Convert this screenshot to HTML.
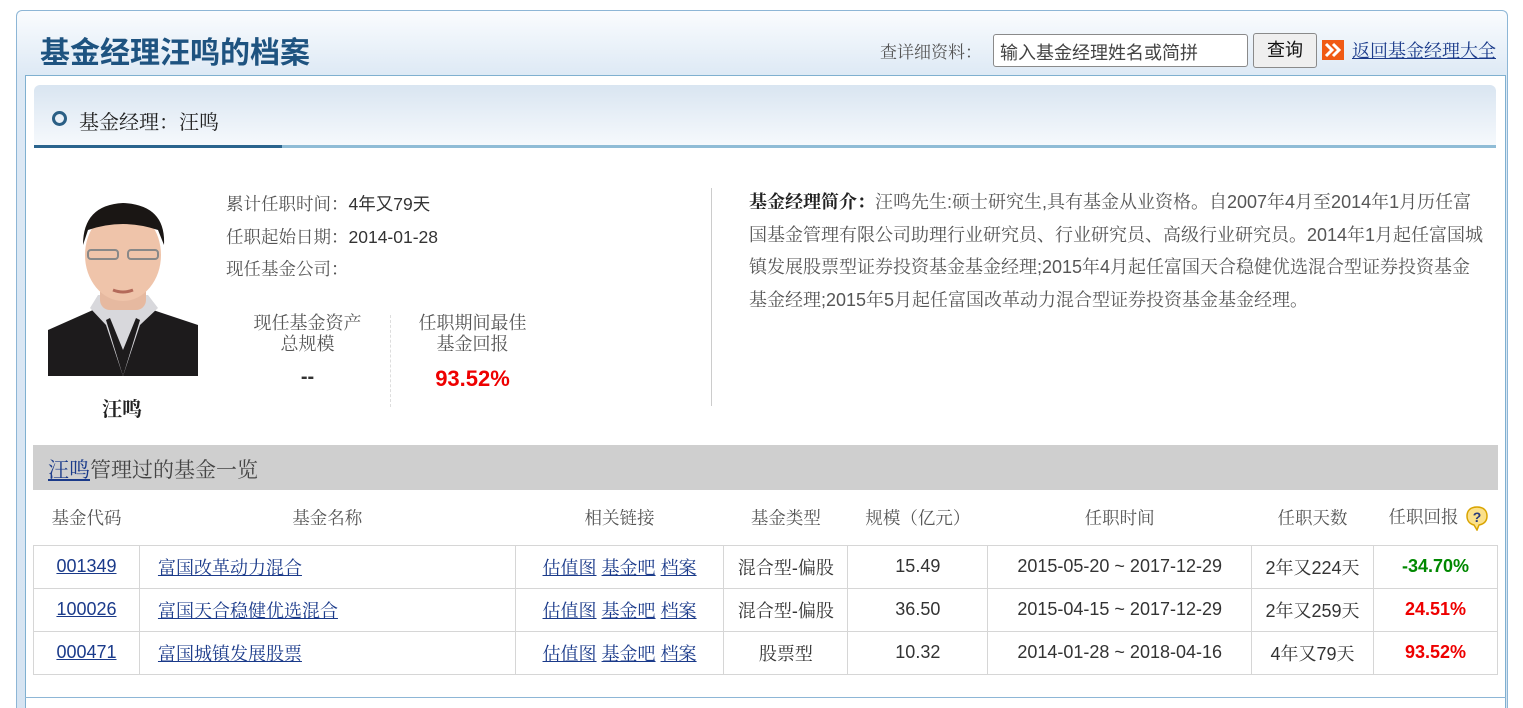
<!DOCTYPE html>
<html><head><meta charset="utf-8">
<style>
*{margin:0;padding:0;box-sizing:border-box}
html,body{width:1523px;height:708px;overflow:hidden}
body{background:#fff;position:relative;font-family:"Liberation Sans","Noto Sans CJK SC",sans-serif;color:#333}
.abs{position:absolute}
.serif{font-family:"Liberation Sans","Noto Serif CJK SC",serif}
a{color:#1a3a8a;text-decoration:underline}
#outer{left:16px;top:10px;width:1492px;height:698px;border:1px solid #8db6d6;border-bottom:none;border-radius:6px 6px 0 0;background:linear-gradient(#fafcfe 0px,#dde9f5 65px,#d6e4f2 100%)}
#inner{left:25px;top:75px;width:1481px;height:633px;background:#fff;border:1px solid #7fb0d0;border-bottom:none}
#title{left:40px;top:28px;font-size:30px;font-weight:bold;color:#1e5380}
#sec{left:34px;top:85px;width:1462px;height:63px;border-radius:6px 6px 0 0;background:linear-gradient(#d9e5f1,#f7fafd)}
table{border-collapse:collapse;position:absolute;left:33px;top:490px;width:1465px}
td{border:1px solid #d6d6d6;text-align:center;font-size:18px;height:43px;color:#333}
tr.h td{border:none;border-bottom:1px solid #d6d6d6;height:55px;color:#555;font-size:17.5px}
.num{font-family:"Liberation Sans",sans-serif;font-size:18px}
</style></head><body>
<div id="outer" class="abs"></div>
<div id="title" class="abs">基金经理汪鸣的档案</div>
<div class="abs serif" style="left:880px;top:38px;font-size:17px;color:#555">查详细资料：</div>
<div class="abs" style="left:993px;top:34px;width:255px;height:33px;border:1px solid #8a8a8a;border-radius:3px;background:#fff;font-size:18px;color:#444;padding:4px 6px">输入基金经理姓名或简拼</div>
<div class="abs" style="left:1253px;top:33px;width:64px;height:35px;border:1px solid #8a8a8a;border-radius:3px;background:#efefef;font-size:18px;color:#111;text-align:center;line-height:33px">查询</div>
<svg class="abs" style="left:1322px;top:40px" width="22" height="20"><rect width="22" height="20" fill="#f05a14"/><path d="M4 4l6 6-6 6M11 4l6 6-6 6" stroke="#fff" stroke-width="3" fill="none"/></svg>
<a class="abs serif" style="left:1352px;top:37px;font-size:18px">返回基金经理大全</a>
<div id="inner" class="abs"></div>
<div id="sec" class="abs"></div>
<div class="abs" style="left:34px;top:145px;width:1462px;height:3px;background:#8fbcd6"></div>
<div class="abs" style="left:34px;top:145px;width:248px;height:3px;background:#2a648e"></div>
<div class="abs" style="left:52px;top:111px;width:15px;height:15px;border:3px solid #2a5f85;border-radius:50%"></div>
<div class="abs serif" style="left:79px;top:106px;font-size:20px;color:#222">基金经理：汪鸣</div>

<svg class="abs" style="left:48px;top:200px" width="150" height="176" viewBox="0 0 150 176">
<rect width="150" height="176" fill="#fff"/>
<path d="M0 130 L45 110 L105 110 L150 125 L150 176 L0 176Z" fill="#1d1b1c"/>
<path d="M42 108 L58 125 L75 176 L92 125 L110 108 L100 95 L50 95Z" fill="#d8d8dc"/>
<path d="M58 120 L75 176 L92 120 L88 118 L75 150 L62 118Z" fill="#1d1b1c"/>
<rect x="52" y="60" width="46" height="50" rx="10" fill="#e6b9a0"/>
<ellipse cx="75" cy="55" rx="38" ry="46" fill="#efc4aa"/>
<path d="M35 45 Q35 5 75 3 Q118 5 116 45 L110 30 Q75 18 40 30Z" fill="#1a1614"/>
<rect x="40" y="50" width="30" height="9" rx="3" fill="none" stroke="#888" stroke-width="2"/>
<rect x="80" y="50" width="30" height="9" rx="3" fill="none" stroke="#888" stroke-width="2"/>
<path d="M65 90 Q75 94 85 90" stroke="#b46a5a" stroke-width="3" fill="none"/>
</svg>
<div class="abs serif" style="left:102px;top:393px;font-size:20px;font-weight:bold;color:#222">汪鸣</div>

<div class="abs" style="left:226px;top:188px;font-size:17.5px;line-height:32.5px;color:#555">
<div><span class="serif">累计任职时间：</span><span style="color:#333">4年又79天</span></div>
<div><span class="serif">任职起始日期：</span><span style="color:#333">2014-01-28</span></div>
<div><span class="serif">现任基金公司：</span></div>
</div>
<div class="abs serif" style="left:230px;top:313px;width:155px;text-align:center;font-size:18px;line-height:21px;color:#555">现任基金资产<br>总规模</div>
<div class="abs" style="left:230px;top:366px;width:155px;text-align:center;font-size:20px;font-weight:bold;color:#333">--</div>
<div class="abs" style="left:390px;top:315px;height:92px;border-left:1px dashed #ddd"></div>
<div class="abs serif" style="left:395px;top:313px;width:155px;text-align:center;font-size:18px;line-height:21px;color:#555">任职期间最佳<br>基金回报</div>
<div class="abs" style="left:395px;top:366px;width:155px;text-align:center;font-size:22px;font-weight:bold;color:#e00">93.52%</div>

<div class="abs" style="left:711px;top:188px;height:218px;border-left:1px solid #ccc"></div>
<div class="abs serif" style="left:749px;top:186px;font-size:18px;line-height:32.5px;color:#555;white-space:nowrap">
<div><b style="color:#222">基金经理简介：</b>汪鸣先生:硕士研究生,具有基金从业资格。自2007年4月至2014年1月历任富</div>
<div>国基金管理有限公司助理行业研究员、行业研究员、高级行业研究员。2014年1月起任富国城</div>
<div>镇发展股票型证券投资基金基金经理;2015年4月起任富国天合稳健优选混合型证券投资基金</div>
<div>基金经理;2015年5月起任富国改革动力混合型证券投资基金基金经理。</div>
</div>

<div class="abs" style="left:33px;top:445px;width:1465px;height:45px;background:#cfcfcf"></div>
<div class="abs serif" style="left:48px;top:454px;font-size:21px;color:#444"><a style="color:#1a3a8a">汪鸣</a>管理过的基金一览</div>

<table class="serif">
<colgroup><col style="width:106px"><col style="width:376px"><col style="width:209px"><col style="width:124px"><col style="width:140px"><col style="width:264px"><col style="width:122px"><col style="width:124px"></colgroup>
<tr class="h"><td>基金代码</td><td>基金名称</td><td>相关链接</td><td>基金类型</td><td>规模（亿元）</td><td>任职时间</td><td>任职天数</td><td style="text-align:left;padding-left:15px">任职回报 <svg width="24" height="26" style="vertical-align:middle;margin-left:2px" viewBox="0 0 24 26"><path d="M12 2C5 2 2 6 2 11c0 5 3 8 7 9l3 5 2-5c5-1 8-4 8-9 0-5-3-9-10-9z" fill="#fbe08a" stroke="#d9a400" stroke-width="1.5"/><text x="12" y="17" font-size="14" font-weight="bold" text-anchor="middle" fill="#2a3a7a" font-family="Liberation Sans">?</text></svg></td></tr>
<tr><td class="num"><a>001349</a></td><td style="text-align:left;padding-left:18px"><a>富国改革动力混合</a></td><td><a>估值图</a> <a>基金吧</a> <a>档案</a></td><td>混合型-偏股</td><td class="num">15.49</td><td class="num">2015-05-20 ~ 2017-12-29</td><td>2年又224天</td><td class="num" style="color:#080;font-weight:bold">-34.70%</td></tr>
<tr><td class="num"><a>100026</a></td><td style="text-align:left;padding-left:18px"><a>富国天合稳健优选混合</a></td><td><a>估值图</a> <a>基金吧</a> <a>档案</a></td><td>混合型-偏股</td><td class="num">36.50</td><td class="num">2015-04-15 ~ 2017-12-29</td><td>2年又259天</td><td class="num" style="color:#e00;font-weight:bold">24.51%</td></tr>
<tr><td class="num"><a>000471</a></td><td style="text-align:left;padding-left:18px"><a>富国城镇发展股票</a></td><td><a>估值图</a> <a>基金吧</a> <a>档案</a></td><td>股票型</td><td class="num">10.32</td><td class="num">2014-01-28 ~ 2018-04-16</td><td>4年又79天</td><td class="num" style="color:#e00;font-weight:bold">93.52%</td></tr>
</table>
<div class="abs" style="left:25px;top:697px;width:1481px;height:1px;background:#8db6d6"></div>
</body></html>
